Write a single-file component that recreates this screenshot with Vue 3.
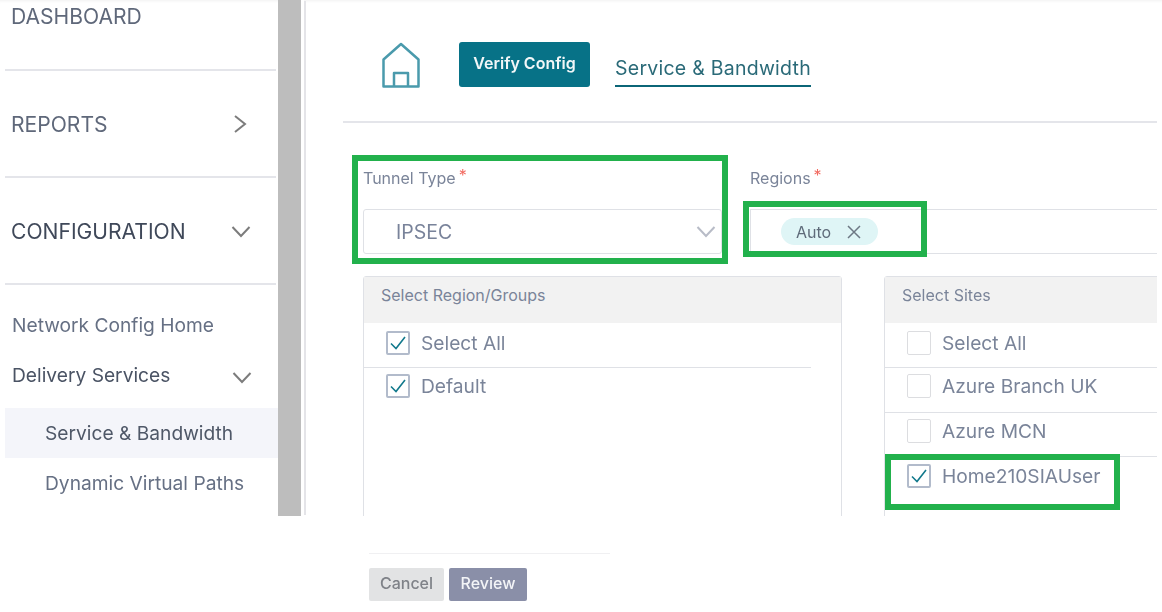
<script setup>
const regions = [{ name: 'Select All', on: true }, { name: 'Default', on: true }]
const sites = [
  { name: 'Select All', on: false },
  { name: 'Azure Branch UK', on: false },
  { name: 'Azure MCN', on: false },
  { name: 'Home210SIAUser', on: true },
]
</script>

<template>
  <div class="shot">
    <div class="top">
      <aside class="side">
        <div class="nav-main">
          <div class="nav-row nav-row--first">DASHBOARD</div>
          <div class="nav-row">
            <span>REPORTS</span>
            <svg class="chev-right" width="14" height="20" viewBox="0 0 14 20"><path d="M2 2l10 8-10 8" /></svg>
          </div>
          <div class="nav-row nav-row--dark">
            <span>CONFIGURATION</span>
            <svg class="chev-down" width="20" height="13" viewBox="0 0 20 13"><path d="M1.500 2l8.500 9 8.500-9" /></svg>
          </div>
        </div>
        <div class="sub">
          <div class="sub-row">Network Config Home</div>
          <div class="sub-row sub-row--dark">
            <span>Delivery Services</span>
            <svg class="chev-down" width="20" height="13" viewBox="0 0 20 13"><path d="M1.500 2l8.500 9 8.500-9" /></svg>
          </div>
          <div class="sub-row sub-row--child sub-row--active">Service &amp; Bandwidth</div>
          <div class="sub-row sub-row--child">Dynamic Virtual Paths</div>
        </div>
      </aside>
      <div class="scroll"></div>

      <main class="main">
        <header class="head">
          <svg class="home" width="38" height="46" viewBox="0 0 38 46">
            <path d="M1.500 17.500L19 2l17.500 15.500v27H1.500z" />
            <path d="M12 44V31h14v13" />
          </svg>
          <button class="verify">Verify Config</button>
          <div class="tab">Service &amp; Bandwidth</div>
        </header>

        <div class="fields">
          <div class="field">
            <div class="label">Tunnel Type<i>*</i></div>
            <div class="select">
              <span>IPSEC</span>
              <svg width="20" height="13" viewBox="0 0 20 13"><path d="M1.500 2l8.500 9 8.500-9" /></svg>
            </div>
          </div>
          <div class="field field--grow">
            <div class="label">Regions<i>*</i></div>
            <div class="tags">
              <span class="chip">
                Auto
                <svg width="14" height="14" viewBox="0 0 14 14"><path d="M1 1l12 12M13 1L1 13" /></svg>
              </span>
            </div>
          </div>
        </div>

        <div class="panels">
          <section class="panel panel--regions">
            <div class="panel-head">Select Region/Groups</div>
            <div v-for="r in regions" :key="r.name" class="row">
              <span class="box" :class="{ 'box--on': r.on }">
                <svg v-if="r.on" width="18" height="16" viewBox="0 0 18 16"><path d="M2 8.500l5 5L16 2" /></svg>
              </span>
              {{ r.name }}
            </div>
          </section>
          <section class="panel panel--sites">
            <div class="panel-head">Select Sites</div>
            <div v-for="s in sites" :key="s.name" class="row">
              <span class="box" :class="{ 'box--on': s.on }">
                <svg v-if="s.on" width="18" height="16" viewBox="0 0 18 16"><path d="M2 8.500l5 5L16 2" /></svg>
              </span>
              {{ s.name }}
            </div>
          </section>
        </div>
      </main>
    </div>

    <footer class="foot">
      <div class="actions">
        <button class="btn btn--cancel">Cancel</button>
        <button class="btn btn--review">Review</button>
      </div>
    </footer>

    <!-- green annotation boxes drawn on top of the screenshot -->
    <div class="mark mark--type"></div>
    <div class="mark mark--regions"></div>
    <div class="mark mark--site"></div>
  </div>
</template>

<style>
html, body {
  margin: 0;
  background: #fff;
}
</style>

<style scoped>
.shot {
  position: relative;
  width: 1162px;
  height: 612px;
  overflow: hidden;
  background: #fff;
  font-family: Inter, "Open Sans", sans-serif;
  color: #7a8499;
}

.top {
  display: flex;
  height: 516px;
  overflow: hidden;
  box-shadow: inset 0 3px 3px -2px rgba(0, 0, 0, 0.06);
  filter: blur(0.3px);
}

.side {
  width: 273px;
  flex: none;
  padding-left: 5px;
}

.nav-main {
  margin-right: 2px;
}

.nav-row {
  display: flex;
  justify-content: space-between;
  align-items: center;
  box-sizing: border-box;
  height: 107px;
  padding: 1px 25px 0 6px;
  border-bottom: 2px solid #e4e5ea;
  font-size: 21.100px;
  color: #5f687a;
}

.nav-row--first {
  height: 71px;
  align-items: flex-start;
  padding-top: 4px;
}

.nav-row--dark {
  color: #3f4859;
}

.chev-right path,
.chev-down path {
  fill: none;
  stroke: #7c7c7c;
  stroke-width: 2;
}

.chev-right {
  margin-right: 4px;
}

.sub {
  padding-top: 15px;
}

.sub-row {
  display: flex;
  justify-content: space-between;
  align-items: center;
  height: 50px;
  padding: 0 26px 0 7px;
  font-size: 19.200px;
  color: #667084;
}

.sub-row--dark {
  color: #4a5364;
  margin-bottom: 8px;
}

.sub-row--dark svg {
  margin-top: 4px;
}

.sub-row--child {
  padding-left: 40px;
}

.sub-row--active {
  background: #f4f5fa;
  color: #4f5868;
}

.scroll {
  width: 23px;
  flex: none;
  background: #bdbdbd;
  border-right: 3px solid #fff;
  box-shadow: 3px 0 0 -1px #e4e4e8;
}

.main {
  flex: 1;
  min-width: 0;
  margin-right: 5px;
  overflow: hidden;
}

.head {
  display: flex;
  align-items: flex-start;
  box-sizing: border-box;
  height: 123px;
  margin-left: 39px;
  padding: 42px 0 0 39px;
  border-bottom: 2px solid #e4e5ea;
}

.home {
  flex: none;
}

.home path {
  fill: none;
  stroke: #4a9aac;
  stroke-width: 2.500;
  stroke-linejoin: round;
}

.verify {
  width: 131px;
  height: 45px;
  margin-left: 39px;
  padding: 0 0 3px;
  border: 0;
  border-radius: 3px;
  background: #077287;
  color: #f2f7f8;
  font: 600 16px Inter, sans-serif;
}

.tab {
  margin: 10px 0 0 25px;
  height: 33px;
  line-height: 32px;
  border-bottom: 2px solid #0b6577;
  font-size: 19.500px;
  letter-spacing: 0.25px;
  color: #2a6a78;
  white-space: nowrap;
}

.fields {
  display: flex;
  gap: 28px;
  padding: 45px 0 0 59px;
}

.field {
  width: 359px;
  flex: none;
}

.field--grow {
  width: 500px;
}

.label {
  height: 20px;
  line-height: 20px;
  margin-bottom: 21px;
  font-size: 16px;
  color: #7a8499;
}

.label i {
  position: relative;
  top: -3px;
  margin-left: 3px;
  font-style: normal;
  color: #f26a60;
}

.select {
  display: flex;
  justify-content: space-between;
  align-items: center;
  box-sizing: border-box;
  height: 45px;
  padding: 0 5px 0 32px;
  border: 1px solid #dfe1e6;
  border-radius: 3px;
  font-size: 19.500px;
  color: #79839a;
}

.select path {
  fill: none;
  stroke: #b8bcc7;
  stroke-width: 2;
}

.tags {
  display: flex;
  align-items: center;
  box-sizing: border-box;
  height: 45px;
  padding-left: 30px;
  border: 1px solid #dfe1e6;
  border-right: 0;
}

.chip {
  display: flex;
  align-items: center;
  gap: 16px;
  box-sizing: border-box;
  width: 97px;
  height: 27px;
  padding-left: 15px;
  border-radius: 14px;
  background: #dff5f6;
  font-size: 16px;
  color: #5f6b7a;
}

.chip path {
  stroke: #6d7884;
  stroke-width: 1.5;
}

.panels {
  display: flex;
  gap: 42px;
  margin: 22px 0 0 59px;
}

.panel {
  box-sizing: border-box;
  flex: none;
  height: 260px;
  border: 1px solid #dfe1e6;
  border-radius: 3px 3px 0 0;
}

.panel--regions {
  width: 479px;
}

.panel--sites {
  width: 400px;
}

.panel-head {
  box-sizing: border-box;
  height: 46px;
  padding: 8px 17px;
  background: #f2f2f2;
  font-size: 16px;
  line-height: 20px;
  color: #7a8499;
}

.row {
  display: flex;
  align-items: flex-start;
  gap: 11px;
  box-sizing: border-box;
  height: 44.500px;
  padding: 5.500px 0 0 22px;
  border-bottom: 1px solid #dfe1e6;
  font-size: 19.200px;
  line-height: 24px;
  color: #7a8499;
}

.row:nth-child(2) {
  height: 45px;
  padding-top: 8px;
}

.row:nth-child(4),
.row:nth-child(5) {
  padding-top: 6.500px;
}

.row:last-child {
  border-bottom: 0;
}

.panel--regions .row {
  margin-right: 30px;
}

.box {
  display: flex;
  align-items: center;
  justify-content: center;
  box-sizing: border-box;
  width: 24px;
  height: 24px;
  flex: none;
  border: 1px solid #dcdde0;
  border-radius: 2px;
}

.box--on {
  border: 2px solid #b2bbcb;
}

.box path {
  fill: none;
  stroke: #12798c;
  stroke-width: 1.6;
}

.foot {
  padding: 37px 0 0 369px;
  filter: blur(0.3px);
}

.actions {
  display: flex;
  gap: 5px;
  width: 241px;
  padding-top: 14px;
  border-top: 1px solid #f0f0f2;
}

.btn {
  height: 33px;
  padding: 0 0 3px;
  border: 0;
  border-radius: 2px;
  font: 500 16px Inter, sans-serif;
}

.btn--cancel {
  width: 75px;
  background: #e2e3e4;
  color: #7f8288;
}

.btn--review {
  width: 78px;
  background: #8a8fa8;
  color: #f3f4f7;
}

.mark {
  position: absolute;
  box-sizing: border-box;
  border: 6px solid #22b14c;
}

.mark--type {
  left: 352px;
  top: 155px;
  width: 376px;
  height: 109px;
}

.mark--regions {
  left: 743px;
  top: 201px;
  width: 184px;
  height: 56px;
}

.mark--site {
  left: 885px;
  top: 454px;
  width: 235px;
  height: 56px;
}
</style>
